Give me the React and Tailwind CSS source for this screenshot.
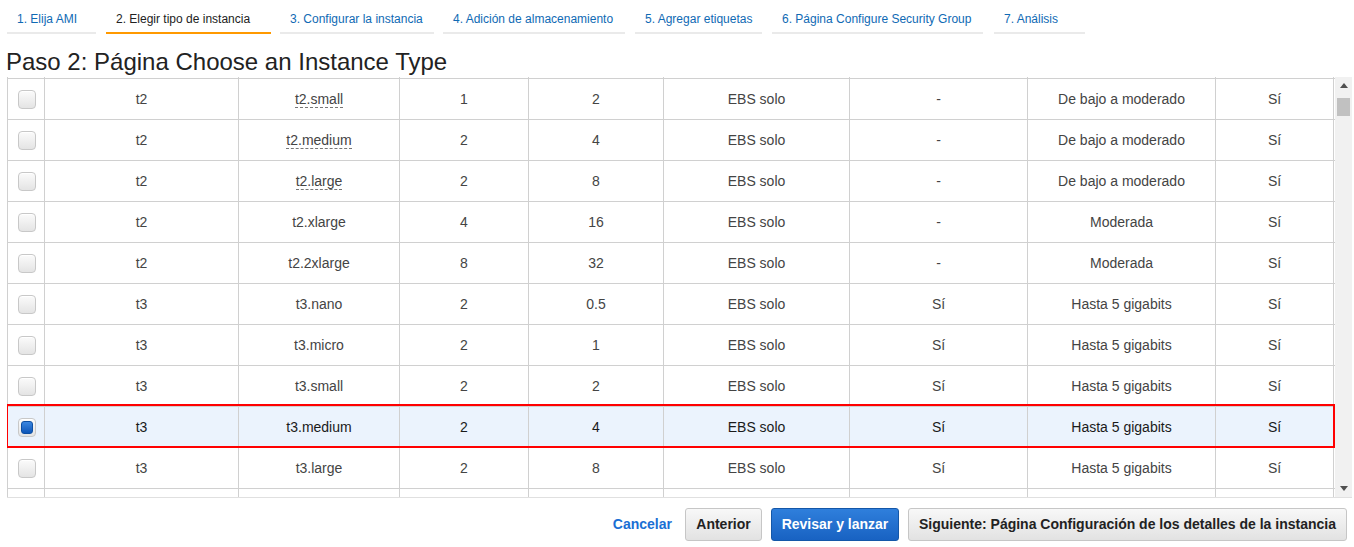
import React from "react";

const tabs = [
  { label: "1. Elija AMI", w: "w-[89px]", active: false },
  { label: "2. Elegir tipo de instancia", w: "w-[165px]", active: true },
  { label: "3. Configurar la instancia", w: "w-[154px]", active: false },
  { label: "4. Adición de almacenamiento", w: "w-[182px]", active: false },
  { label: "5. Agregar etiquetas", w: "w-[127px]", active: false },
  { label: "6. Página Configure Security Group", w: "w-[211px]", active: false },
  { label: "7. Análisis", w: "w-[91px]", active: false },
];

const rows = [
  ["t2", "t2.small", "1", "2", "EBS solo", "-", "De bajo a moderado", "Sí", true],
  ["t2", "t2.medium", "2", "4", "EBS solo", "-", "De bajo a moderado", "Sí", true],
  ["t2", "t2.large", "2", "8", "EBS solo", "-", "De bajo a moderado", "Sí", true],
  ["t2", "t2.xlarge", "4", "16", "EBS solo", "-", "Moderada", "Sí", false],
  ["t2", "t2.2xlarge", "8", "32", "EBS solo", "-", "Moderada", "Sí", false],
  ["t3", "t3.nano", "2", "0.5", "EBS solo", "Sí", "Hasta 5 gigabits", "Sí", false],
  ["t3", "t3.micro", "2", "1", "EBS solo", "Sí", "Hasta 5 gigabits", "Sí", false],
  ["t3", "t3.small", "2", "2", "EBS solo", "Sí", "Hasta 5 gigabits", "Sí", false],
  ["t3", "t3.medium", "2", "4", "EBS solo", "Sí", "Hasta 5 gigabits", "Sí", false],
  ["t3", "t3.large", "2", "8", "EBS solo", "Sí", "Hasta 5 gigabits", "Sí", false],
];

const widths = [
  "w-[37px]",
  "w-[194px]",
  "w-[161px]",
  "w-[129px]",
  "w-[135px]",
  "w-[186px]",
  "w-[178px]",
  "w-[188px]",
  "w-[119px]",
];

function Checkbox({ checked }) {
  return (
    <div className="w-[18px] h-[19px] rounded-[4px] border border-[#c8c8c8] bg-gradient-to-b from-[#fbfbfb] to-[#e4e4e4] p-[2px] shadow-[inset_0_1px_0_#fff]">
      {checked && (
        <div className="w-full h-full rounded-[3px] bg-gradient-to-b from-[#3a86e0] to-[#0c56b8] border border-[#0d4fa3]" />
      )}
    </div>
  );
}

function EmptyRow({ h }) {
  return (
    <div className={`flex ${h} border-b border-[#d0d0d0]`}>
      {widths.map((w, i) => (
        <div
          key={i}
          className={`${w} h-full border-l border-[#d0d0d0] ${i === 8 ? "border-r" : ""}`}
        />
      ))}
    </div>
  );
}

function Row({ data, selected }) {
  const cells = data.slice(0, 8);
  const dashed = data[8];
  return (
    <div
      className={`relative flex h-[41px] border-b border-[#d0d0d0] ${
        selected ? "bg-[#ebf3fd] text-[#1a1a1a]" : "bg-white text-[#444]"
      }`}
    >
      <div className={`${widths[0]} h-full border-l border-[#d0d0d0] flex items-center justify-center pl-[1px]`}>
        <Checkbox checked={selected} />
      </div>
      {cells.map((c, i) => (
        <div
          key={i}
          className={`${widths[i + 1]} h-full border-l border-[#d0d0d0] ${
            i === 7 ? "border-r" : ""
          } flex items-center justify-center text-[14px]`}
        >
          {i === 1 && dashed ? (
            <span className="inline-block leading-[16px] border-b border-dashed border-[#777]">{c}</span>
          ) : (
            <span>{c}</span>
          )}
        </div>
      ))}
      {selected && (
        <div className="absolute left-[-1px] right-0 top-[-3px] bottom-[-1px] border-2 border-[#f00] pointer-events-none" />
      )}
    </div>
  );
}

export default function App() {
  return (
    <div className="w-[1354px] h-[547px] bg-white font-['Liberation_Sans',Arial,sans-serif] text-[#333] overflow-hidden">
      {/* Tabs */}
      <div className="flex pl-[7px] h-[34px]">
        {tabs.map((t, i) => (
          <div
            key={i}
            className={`${t.w} shrink-0 h-[34px] pt-[11px] pl-[10px] text-[12px] leading-[16px] whitespace-nowrap border-b-2 ${
              t.active ? "border-[#ff9900] text-[#222]" : "border-[#eaeaea] text-[#0f6ab4]"
            } ${i === 0 ? "mr-[10px]" : i === 5 ? "mr-[11px]" : i === 3 || i === 4 ? "mr-[10px]" : "mr-[9px]"}`}
          >
            {t.label}
          </div>
        ))}
      </div>

      {/* Heading */}
      <h1 className="mt-[15px] ml-[6px] h-[28px] text-[24px] leading-[26px] text-[#222] font-normal whitespace-nowrap">
        Paso 2: Página Choose an Instance Type
      </h1>

      {/* Table */}
      <div className="ml-[7px] w-[1345px] h-[421px] flex border-b border-[#e0e0e0] overflow-hidden">
        <div className="w-[1328px] shrink-0">
          <EmptyRow h="h-[2px]" />
          {rows.map((r, i) => (
            <Row key={i} data={r} selected={i === 8} />
          ))}
          <div className="flex h-[8px]">
            {widths.map((w, i) => (
              <div
                key={i}
                className={`${w} h-full border-l border-[#d0d0d0] ${i === 8 ? "border-r" : ""}`}
              />
            ))}
          </div>
        </div>
        {/* Scrollbar */}
        <div className="w-[17px] shrink-0 h-full bg-[#f1f1f1] flex flex-col items-center">
          <div className="h-[17px] w-full flex items-center justify-center">
            <svg width="8" height="5" viewBox="0 0 8 5">
              <path d="M0 5 L4 0 L8 5 Z" fill="#505050" />
            </svg>
          </div>
          <div className="mt-[4px] w-[13px] h-[18px] bg-[#c1c1c1]" />
          <div className="flex-1" />
          <div className="h-[17px] w-full flex items-center justify-center">
            <svg width="8" height="5" viewBox="0 0 8 5">
              <path d="M0 0 L8 0 L4 5 Z" fill="#505050" />
            </svg>
          </div>
        </div>
      </div>

      {/* Buttons */}
      <div className="flex justify-end items-center pr-[7px] mt-[10px] h-[33px]">
        <span className="text-[14px] font-bold text-[#1a6fd4] mr-[13px]">Cancelar</span>
        <div className="w-[77px] h-[33px] mr-[9px] rounded-[3px] border border-[#c6c6c6] bg-gradient-to-b from-[#f8f8f8] to-[#e2e2e2] flex items-center justify-center text-[14px] font-bold text-[#222]">
          Anterior
        </div>
        <div className="w-[128px] h-[33px] mr-[9px] rounded-[3px] border border-[#1457a8] bg-gradient-to-b from-[#2f7fdc] to-[#1862c2] flex items-center justify-center text-[14px] font-bold text-white">
          Revisar y lanzar
        </div>
        <div className="w-[439px] h-[33px] rounded-[3px] border border-[#c6c6c6] bg-gradient-to-b from-[#f8f8f8] to-[#e2e2e2] flex items-center justify-center text-[14px] font-bold text-[#222]">
          Siguiente: Página Configuración de los detalles de la instancia
        </div>
      </div>
    </div>
  );
}
